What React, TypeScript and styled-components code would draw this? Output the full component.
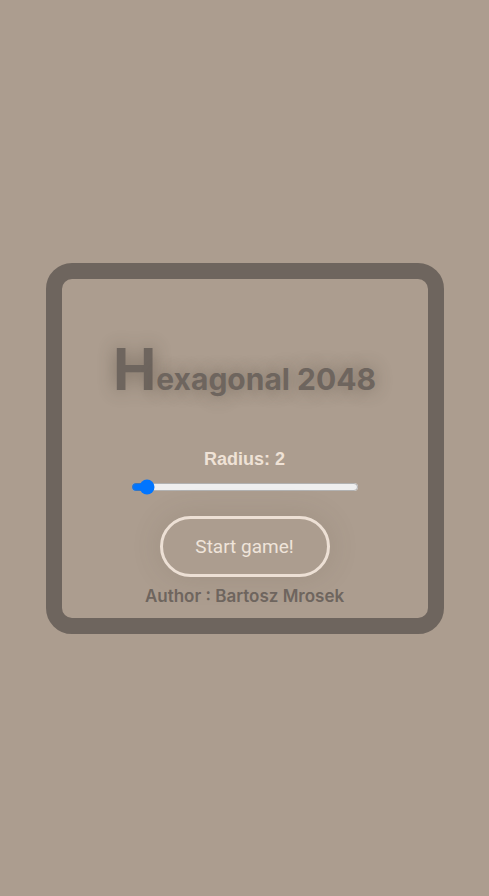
import React, { useState } from "react";
import styled, { createGlobalStyle } from "styled-components";

const GlobalStyle = createGlobalStyle`
    html, body {
        margin: 0;
        padding: 0;
        height: 100%;
        background-color: #ac9d8f;
    }
    #root {
        height: 100%;
    }
`;

const Page = styled.div`
    min-height: 100vh;
    display: flex;
    justify-content: center;
    align-items: center;
    background-color: #ac9d8f;
`;

const Menu = styled.div`
    box-sizing: border-box;
    width: 398px;
    height: 371px;
    border: 16px solid #6e655e;
    border-radius: 26px;
    display: flex;
    flex-direction: column;
    align-items: center;
    padding-top: 61px;
`;

const Title = styled.h1`
    margin: 0;
    font-family: Inter, sans-serif;
    font-weight: bold;
    font-size: 30px;
    color: #6e655e;
    text-shadow: 0 0 18px rgba(60, 50, 40, 0.45);
    line-height: 1;
`;

const Initial = styled.span`
    font-size: 58px;
`;

const Label = styled.label`
    margin-top: 51px;
    font-family: "Liberation Sans", Arial, sans-serif;
    font-weight: bold;
    font-size: 18px;
    color: #efe2d6;
`;

const Slider = styled.input`
    margin: 9px 0 0;
    width: 228px;
    accent-color: #0075ff;
`;

const StartButton = styled.button`
    margin-top: 21px;
    width: 170px;
    height: 61px;
    border: 3px solid #ede0d5;
    border-radius: 31px;
    background: transparent;
    box-shadow: 0 0 30px rgba(90, 75, 60, 0.15);
    font-family: Roboto, "Liberation Sans", sans-serif;
    font-size: 19px;
    color: #efe4da;
    cursor: pointer;
`;

const Author = styled.p`
    margin: 9px 0 0;
    font-family: Inter, sans-serif;
    font-weight: 600;
    font-size: 17px;
    color: #6e655e;
`;

export default function App() {
    const [radius, setRadius] = useState(2);
    return (
        <Page>
            <GlobalStyle />
            <Menu>
                <Title>
                    <Initial>H</Initial>exagonal 2048
                </Title>
                <Label htmlFor="radius">Radius: {radius}</Label>
                <Slider
                    id="radius"
                    type="range"
                    min={1}
                    max={27}
                    value={radius}
                    onChange={(e) => setRadius(Number(e.target.value))}
                />
                <StartButton>Start game!</StartButton>
                <Author>Author : Bartosz Mrosek</Author>
            </Menu>
        </Page>
    );
}
